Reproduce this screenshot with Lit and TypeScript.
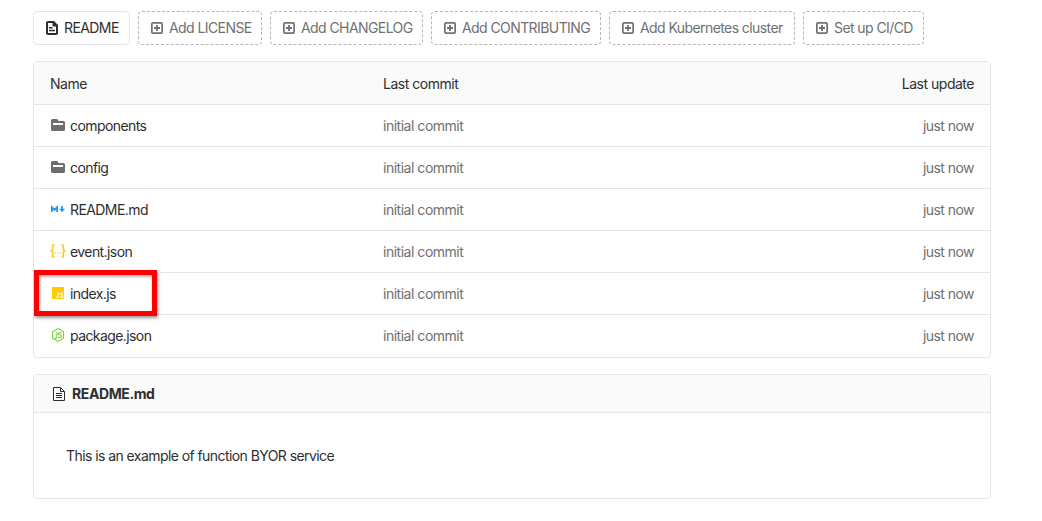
import { LitElement, html, css, svg, nothing } from "lit";
import { customElement, property } from "lit/decorators.js";

const icons: Record<string, { size: number; art: unknown }> = {
  doc: {
    size: 14,
    art: svg`<path fill="#2e2e2e" fill-rule="evenodd" d="M3 0h6l4 4v8a2 2 0 0 1-2 2H3a2 2 0 0 1-2-2V2a2 2 0 0 1 2-2zm0 2v10h8V5.500H8.500a1 1 0 0 1-1-1V2zM4 6h3.500v1.400H4zM4 8.800h6v1.400H4z"/>`,
  },
  plus: {
    size: 14,
    art: svg`<path fill="#707070" fill-rule="evenodd" d="M3 1h8a2 2 0 0 1 2 2v8a2 2 0 0 1-2 2H3a2 2 0 0 1-2-2V3a2 2 0 0 1 2-2zm-.3 1.700v8.600h8.600V2.700zM6.100 4h1.800v2.100H10v1.800H7.900V10H6.100V7.900H4V6.100h2.100z"/>`,
  },
  folder: {
    size: 16,
    art: svg`<path fill="#6e6e6e" fill-rule="evenodd" d="M2.500 2H6.500Q8 2 8.500 4H13.500A1.500 1.500 0 0 1 15 5.500v7a1.500 1.500 0 0 1-1.500 1.500h-11A1.500 1.500 0 0 1 1 12.500v-9A1.500 1.500 0 0 1 2.500 2zM3 6v2h10V6z"/>`,
  },
  markdown: {
    size: 16,
    art: svg`<path fill="none" stroke="#2196f3" stroke-width="1.800" d="M1.900 11V6.200L4.500 8.900 7.100 6.200V11M12 5v5"/><path fill="#2196f3" d="M9 7.700h6L12 11.300z"/>`,
  },
  json: {
    size: 16,
    art: svg`<path fill="none" stroke="#ffca28" stroke-width="1.700" d="M4.500 1.800h-.6Q2.700 1.800 2.700 3v3Q2.700 8 .4 8q2.300 0 2.300 2v3q0 1.200 1.200 1.200h.6M11.500 1.800h.6q1.200 0 1.200 1.200v3q0 2 2.300 2-2.300 0-2.300 2v3q0 1.200-1.200 1.200h-.6"/><path fill="#ffca28" d="M4.600 9.400h1.300v1.400H4.600zM7.300 9.400h1.300v1.400H7.300zM10 9.400h1.300v1.400H10z"/>`,
  },
  js: {
    size: 16,
    art: svg`<path fill="#ffca00" d="M2 2h12v12H2z"/><path fill="none" stroke="#fff8da" stroke-width="1.300" d="M8.200 7.500v4q0 1.100-1.100 1.100-.9 0-1.300-.8M12.800 8.500q-.4-.6-1.200-.6-1.100 0-1.100.9 0 .8 1.200 1.200 1.200.4 1.200 1.300 0 1.200-1.300 1.200-1 0-1.500-.8"/>`,
  },
  node: {
    size: 16,
    art: svg`<path fill="none" stroke="#83cd3e" stroke-width="1.100" d="M8 1.600l5.500 3.200v6.400L8 14.400l-5.500-3.200V4.800zM6.900 5v5q0 1.400-1.300 1.400-.8 0-1.200-.5M11.300 6.300q-.4-.7-1.500-.7-1.500 0-1.500 1.100 0 .9 1.500 1.200 1.700.3 1.700 1.400 0 1.300-1.700 1.300-1.300 0-1.700-1"/>`,
  },
  page: {
    size: 14,
    art: svg`<path fill="none" stroke="#2e2e2e" d="M1.500.5h7l4 4v9h-11zM8.500.5v4h4M4 6.500h6M4 8.500h6M4 10.500h6"/>`,
  },
};

const icon = (name: string) => {
  const { size, art } = icons[name];
  return html`<svg width=${size} height=${size} viewBox="0 0 ${size} ${size}" aria-hidden="true">${art}</svg>`;
};

const actions = [
  { label: "README", icon: "doc", width: 97 },
  { label: "Add LICENSE", icon: "plus", width: 124 },
  { label: "Add CHANGELOG", icon: "plus", width: 153 },
  { label: "Add CONTRIBUTING", icon: "plus", width: 170 },
  { label: "Add Kubernetes cluster", icon: "plus", width: 186 },
  { label: "Set up CI/CD", icon: "plus", width: 121 },
];

const files = [
  { name: "components", icon: "folder" },
  { name: "config", icon: "folder" },
  { name: "README.md", icon: "markdown" },
  { name: "event.json", icon: "json" },
  { name: "index.js", icon: "js", marked: true },
  { name: "package.json", icon: "node" },
];

@customElement("file-row")
class FileRow extends LitElement {
  @property() name = "";
  @property() icon = "";
  @property({ type: Boolean }) marked = false;

  static styles = css`
    :host { display: grid; grid-template-columns: 333px 1fr auto; align-items: center; height: 41px; padding: 0 16px; border-top: 1px solid #e5e5e5; position: relative; color: #707070; }
    .name { display: flex; align-items: center; gap: 4px; color: #2e2e2e; letter-spacing: -0.58px; }
    svg { display: block; flex: none; position: relative; top: -1px; }
    .date { letter-spacing: -0.55px; }
    .mark { position: absolute; left: 0; top: -3px; width: 113px; height: 36px; border: 5px solid #f00; box-shadow: 1px 2px 3px rgba(0, 0, 0, 0.4), inset 1px 2px 3px rgba(0, 0, 0, 0.3); z-index: 1; }
  `;

  render() {
    return html`
      <span class="name">${icon(this.icon)}<span>${this.name}</span></span>
      <span>initial commit</span>
      <span class="date">just now</span>
      ${this.marked ? html`<div class="mark"></div>` : nothing}
    `;
  }
}

@customElement("app-root")
class AppRoot extends LitElement {
  static styles = css`
    :host { display: block; box-sizing: border-box; height: 521px; padding: 11px 51px 0 33px; background: #fff; font: 14px/20px Inter, "Liberation Sans", sans-serif; letter-spacing: -0.48px; color: #2e2e2e; white-space: nowrap; }
    .actions { display: flex; gap: 8px; letter-spacing: -0.58px; }
    .action { box-sizing: border-box; height: 34px; display: flex; align-items: center; gap: 5px; padding-left: 11px; border: 1px dashed #b5b5b5; border-radius: 4px; color: #707070; }
    .action.solid { border: 1px solid #e5e5e5; color: #2e2e2e; }
    svg { display: block; flex: none; }
    .files { margin-top: 16px; border: 1px solid #e5e5e5; border-radius: 4px; }
    .head { display: grid; grid-template-columns: 333px 1fr auto; align-items: center; height: 42px; padding: 1px 16px 0; box-sizing: border-box; background: #fafafa; border-radius: 3px 3px 0 0; }
    .files file-row:last-child { height: 42px; }
    .readme { box-sizing: border-box; height: 125px; margin-top: 16px; border: 1px solid #e5e5e5; border-radius: 4px; }
    .title { display: flex; align-items: center; gap: 6px; height: 37px; padding: 0 18px; background: #fafafa; border-bottom: 1px solid #e5e5e5; border-radius: 3px 3px 0 0; font-weight: 700; letter-spacing: -0.4px; }
    .body { padding: 33px 32px; letter-spacing: -0.57px; }
  `;

  render() {
    return html`
      <div class="actions">
        ${actions.map(
          (a) => html`<div class="action ${a.icon === "doc" ? "solid" : ""}" style="width:${a.width}px">
            ${icon(a.icon)}<span>${a.label}</span>
          </div>`
        )}
      </div>
      <div class="files">
        <div class="head"><span>Name</span><span>Last commit</span><span>Last update</span></div>
        ${files.map((f) => html`<file-row .name=${f.name} .icon=${f.icon} .marked=${!!f.marked}></file-row>`)}
      </div>
      <div class="readme">
        <div class="title">${icon("page")}<span>README.md</span></div>
        <div class="body">This is an example of function BYOR service</div>
      </div>
    `;
  }
}
